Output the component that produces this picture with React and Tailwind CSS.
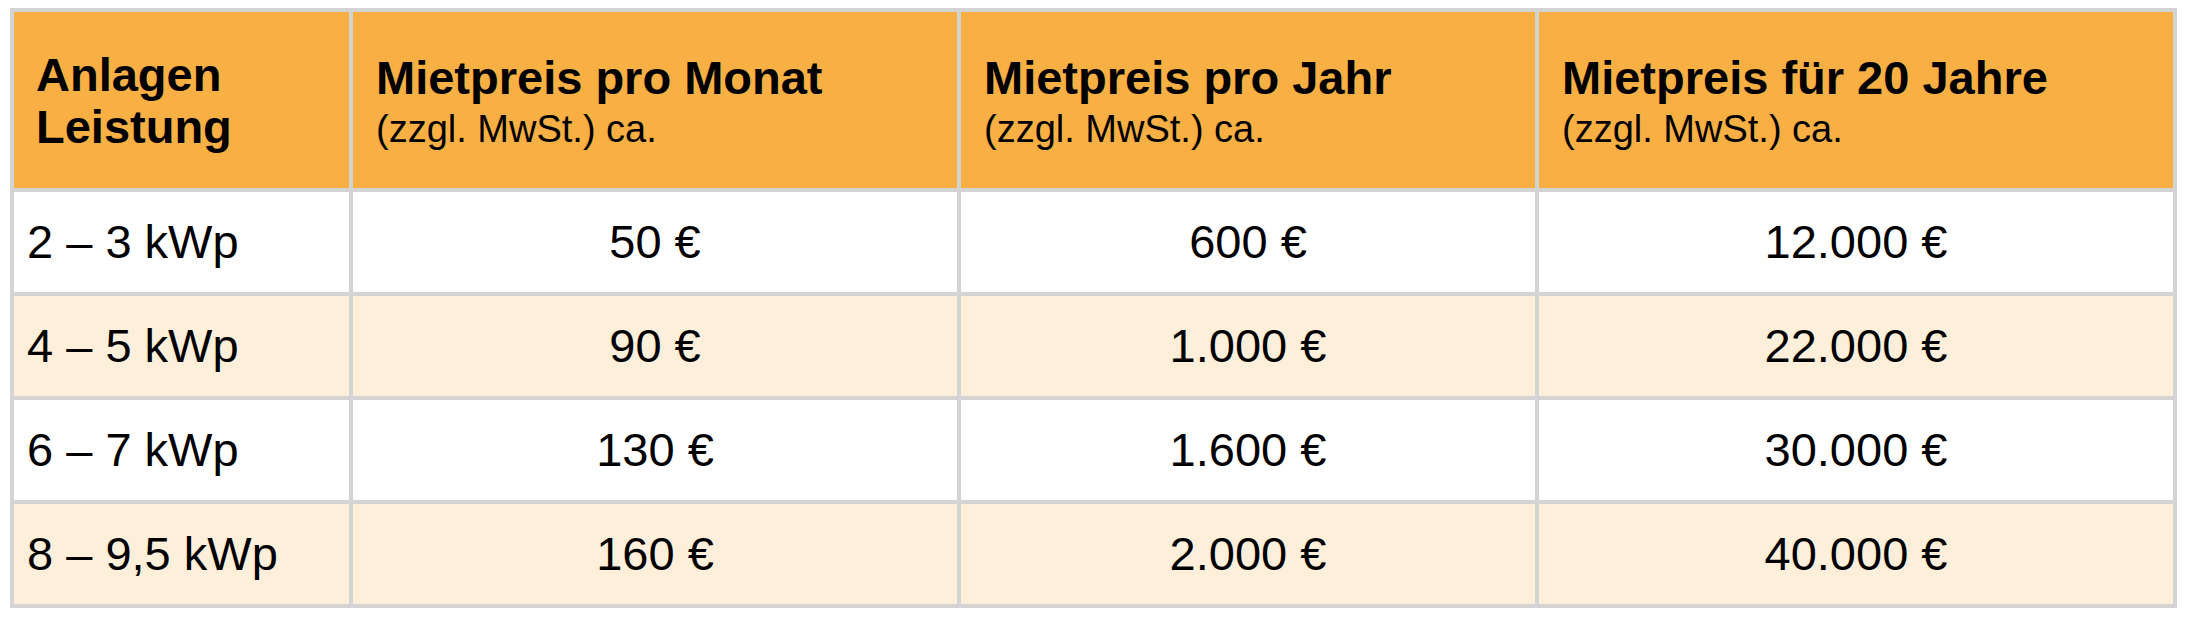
import React from "react";

const rows = [
  ["2 – 3 kWp", "50 €", "600 €", "12.000 €"],
  ["4 – 5 kWp", "90 €", "1.000 €", "22.000 €"],
  ["6 – 7 kWp", "130 €", "1.600 €", "30.000 €"],
  ["8 – 9,5 kWp", "160 €", "2.000 €", "40.000 €"],
];

function HeadCell({ title, sub }) {
  return (
    <div className="bg-[#f8af43] flex flex-col justify-center pl-[23px] pt-[3px]">
      <div className="font-bold text-[47px] leading-[50px]">{title}</div>
      <div className="text-[38px] leading-[42px] mt-[5px]">{sub}</div>
    </div>
  );
}

export default function App() {
  return (
    <div className="w-[2186px] h-[620px] bg-white pt-[8px] pl-[10px] text-black" style={{ fontFamily: '"Liberation Sans", Arial, sans-serif' }}>
      <div className="grid grid-cols-[335px_604px_574px_634px] grid-rows-[176px_100px_100px_100px_100px] gap-[4px] p-[4px] bg-[#d4d4d4] w-max">
        <div className="bg-[#f8af43] flex flex-col justify-center pl-[22px] pt-[2px]">
          <div className="font-bold text-[47px] leading-[52px]">Anlagen</div>
          <div className="font-bold text-[47px] leading-[52px]">Leistung</div>
        </div>
        <HeadCell title="Mietpreis pro Monat" sub="(zzgl. MwSt.) ca." />
        <HeadCell title="Mietpreis pro Jahr" sub="(zzgl. MwSt.) ca." />
        <HeadCell title="Mietpreis für 20 Jahre" sub="(zzgl. MwSt.) ca." />
        {rows.map((r, i) => {
          const bg = i % 2 === 1 ? "bg-[#fdefda]" : "bg-white";
          return (
            <React.Fragment key={i}>
              <div className={`${bg} flex items-center pl-[13px] text-[47px]`}>{r[0]}</div>
              <div className={`${bg} flex items-center justify-center text-[47px]`}>{r[1]}</div>
              <div className={`${bg} flex items-center justify-center text-[47px]`}>{r[2]}</div>
              <div className={`${bg} flex items-center justify-center text-[47px]`}>{r[3]}</div>
            </React.Fragment>
          );
        })}
      </div>
    </div>
  );
}
